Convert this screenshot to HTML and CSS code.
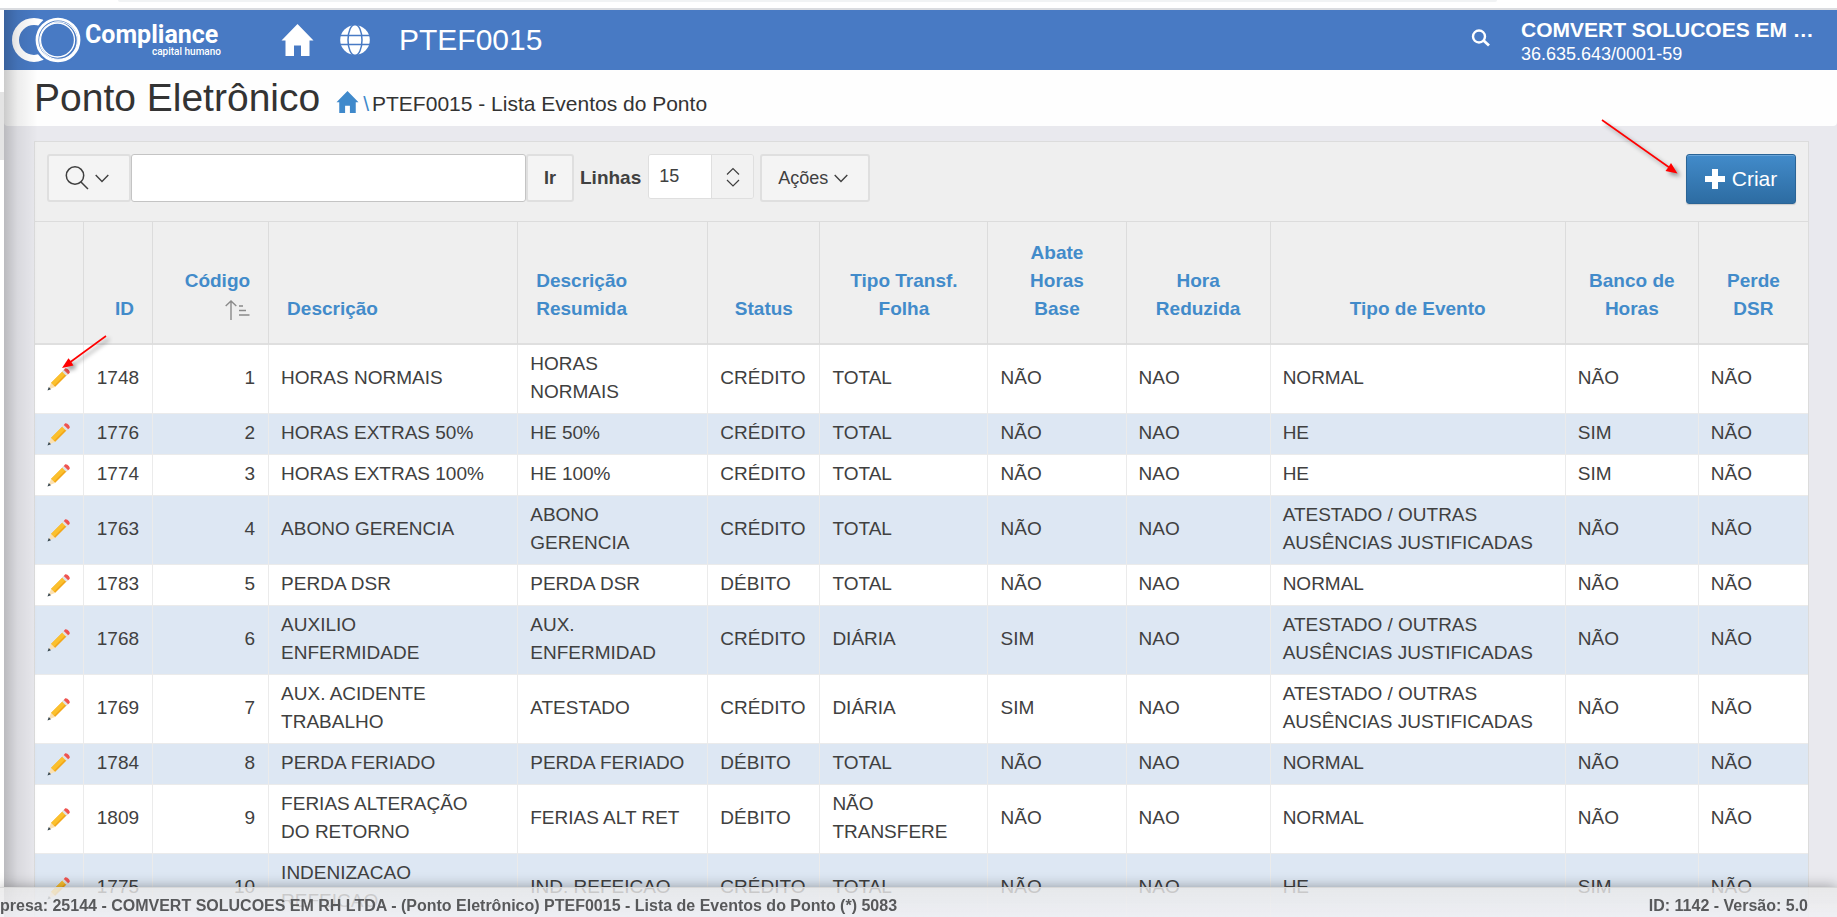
FILE: index.html
```html
<!DOCTYPE html>
<html lang="pt-BR">
<head>
<meta charset="utf-8">
<title>PTEF0015 - Lista Eventos do Ponto</title>
<link rel="stylesheet" href="styles.css">
</head>
<body>
<svg class="defs" aria-hidden="true">
  <symbol id="home" viewBox="0 0 32 32"><path fill="currentColor" d="M16 0 32 16.5H28V32H19.5V21.5H12.5V32H4V16.5H0Z"/></symbol>
  <symbol id="chevron" viewBox="0 0 14 9"><path fill="none" stroke="currentColor" stroke-width="1.4" d="M.7 1 7 7.6 13.300 1"/></symbol>
  <symbol id="pencil" viewBox="0 0 24 24">
    <path fill="#f2a71b" d="m4 16 13-13 4 4L8 20z"/><path fill="#fbc02d" d="m4 16 12.500-12.500 2.800 2.800L7 18.700z"/>
    <path fill="#dfe3e6" d="m15 4.600 2-2 4.400 4.400-2 2z"/>
    <path fill="#ef5350" d="m16.800 2.900 1.200-1.300c1.500-1.500 6 2.800 4.500 4.500l-1.300 1.200z"/>
    <path fill="#fbe0b0" d="m4 16 4 4-6.500 2.600z"/><path fill="#37474f" d="m1.800 20 2.200 2.200L.5 23.400z"/>
  </symbol>
</svg>
<div class="browser"><div class="address"></div></div>
<div class="page">
  <header class="topbar">
    <a class="logo" href="#" aria-label="Compliance capital humano">
      <svg class="rings" viewBox="0 0 70 46" aria-hidden="true">
        <circle cx="22" cy="23" r="18.500" fill="none" stroke="#fff" stroke-width="7"/>
        <circle cx="46" cy="23" r="24.500" fill="#487ac4"/>
        <ellipse cx="46" cy="23" rx="21" ry="20.800" fill="none" stroke="#fff" stroke-width="2.800"/>
        <circle cx="46.500" cy="23.500" r="18.800" fill="none" stroke="#fff" stroke-width="1.100"/>
        <circle cx="45.500" cy="23" r="17" fill="none" stroke="#fff" stroke-width="1.300"/>
      </svg>
      <span class="brand"><b>Compliance</b><small>capital humano</small></span>
    </a>
    <a class="nav-home" href="#" aria-label="Início"><svg><use href="#home"/></svg></a>
    <a class="nav-globe" href="#" aria-label="Idioma">
      <svg viewBox="0 0 30 30"><circle cx="15" cy="15" r="14.800" fill="#fff"/><g fill="none" stroke="#487ac4" stroke-width="1.500"><path d="M0 10.500H30M0 19.500H30"/><ellipse cx="15" cy="15" rx="7" ry="15.500"/></g></svg>
    </a>
    <span class="code">PTEF0015</span>
    <button class="find" aria-label="Pesquisar"><svg viewBox="0 0 20 18"><path fill="none" stroke="#fff" stroke-width="2.800" d="m12 11 6 5.500"/><circle cx="8" cy="7.500" r="6" fill="none" stroke="#fff" stroke-width="2.400"/></svg></button>
    <div class="company"><strong>COMVERT SOLUCOES EM …</strong><span>36.635.643/0001-59</span></div>
  </header>
  <div class="titlebar">
    <h1>Ponto Eletrônico</h1>
    <nav class="crumbs"><a href="#" aria-label="Início"><svg><use href="#home"/></svg></a><i>\</i><span>PTEF0015 - Lista Eventos do Ponto</span></nav>
  </div>
  <main class="report">
    <div class="toolbar">
      <button class="btn search-menu" aria-label="Colunas de pesquisa">
        <svg class="lens" viewBox="0 0 24 24"><g fill="none" stroke="currentColor" stroke-width="1.500"><circle cx="10" cy="9.500" r="8.700"/><path d="m16 16 7 7"/></g></svg>
        <svg class="chev"><use href="#chevron"/></svg>
      </button>
      <input class="search" type="text" aria-label="Pesquisar relatório">
      <button class="btn go">Ir</button>
      <label for="rows">Linhas</label>
      <div class="rows-box"><input id="rows" type="text" value="15"><button aria-label="Linhas por página"><svg viewBox="0 0 14 20"><path fill="none" stroke="currentColor" stroke-width="1.200" d="M1 7.500 7 1.500l6 6M1 13l6 6 6-6"/></svg></button></div>
      <button class="btn actions">Ações <svg class="chev"><use href="#chevron"/></svg></button>
      <button class="create"><svg viewBox="0 0 20 20"><path fill="#fff" d="M7 0h6v7h7v6h-7v7H7v-7H0V7h7z"/></svg>Criar</button>
    </div>
    <table>
      <colgroup><col class="c-edit"><col class="c-id"><col class="c-cod"><col class="c-desc"><col class="c-res"><col class="c-status"><col class="c-transf"><col class="c-abate"><col class="c-hora"><col class="c-tipo"><col class="c-banco"><col class="c-dsr"></colgroup>
      <thead><tr>
        <th></th><th class="num"><a href="#">ID</a></th>
        <th class="num"><a href="#">Código</a><br><svg class="sort" viewBox="0 0 25 20"><path fill="none" stroke="#8a8a8a" stroke-width="1.400" d="M6 20V1M.700 6 6 1l5.300 5M14 6h4M14 10.500h7M14 15h10.500"/></svg></th>
        <th class="left"><a href="#">Descrição</a></th><th class="left"><a href="#">Descrição Resumida</a></th><th><a href="#">Status</a></th><th><a href="#">Tipo Transf. Folha</a></th><th><a href="#">Abate Horas Base</a></th><th><a href="#">Hora Reduzida</a></th><th><a href="#">Tipo de Evento</a></th><th><a href="#">Banco de Horas</a></th><th><a href="#">Perde DSR</a></th>
      </tr></thead>
      <tbody>
        <tr><td><a href="#" aria-label="Editar"><svg><use href="#pencil"/></svg></a></td><td>1748</td><td>1</td><td>HORAS NORMAIS</td><td>HORAS<br>NORMAIS</td><td>CRÉDITO</td><td>TOTAL</td><td>NÃO</td><td>NAO</td><td>NORMAL</td><td>NÃO</td><td>NÃO</td></tr>
        <tr><td><a href="#" aria-label="Editar"><svg><use href="#pencil"/></svg></a></td><td>1776</td><td>2</td><td>HORAS EXTRAS 50%</td><td>HE 50%</td><td>CRÉDITO</td><td>TOTAL</td><td>NÃO</td><td>NAO</td><td>HE</td><td>SIM</td><td>NÃO</td></tr>
        <tr><td><a href="#" aria-label="Editar"><svg><use href="#pencil"/></svg></a></td><td>1774</td><td>3</td><td>HORAS EXTRAS 100%</td><td>HE 100%</td><td>CRÉDITO</td><td>TOTAL</td><td>NÃO</td><td>NAO</td><td>HE</td><td>SIM</td><td>NÃO</td></tr>
        <tr><td><a href="#" aria-label="Editar"><svg><use href="#pencil"/></svg></a></td><td>1763</td><td>4</td><td>ABONO GERENCIA</td><td>ABONO<br>GERENCIA</td><td>CRÉDITO</td><td>TOTAL</td><td>NÃO</td><td>NAO</td><td>ATESTADO / OUTRAS<br>AUSÊNCIAS JUSTIFICADAS</td><td>NÃO</td><td>NÃO</td></tr>
        <tr><td><a href="#" aria-label="Editar"><svg><use href="#pencil"/></svg></a></td><td>1783</td><td>5</td><td>PERDA DSR</td><td>PERDA DSR</td><td>DÉBITO</td><td>TOTAL</td><td>NÃO</td><td>NAO</td><td>NORMAL</td><td>NÃO</td><td>NÃO</td></tr>
        <tr><td><a href="#" aria-label="Editar"><svg><use href="#pencil"/></svg></a></td><td>1768</td><td>6</td><td>AUXILIO<br>ENFERMIDADE</td><td>AUX.<br>ENFERMIDAD</td><td>CRÉDITO</td><td>DIÁRIA</td><td>SIM</td><td>NAO</td><td>ATESTADO / OUTRAS<br>AUSÊNCIAS JUSTIFICADAS</td><td>NÃO</td><td>NÃO</td></tr>
        <tr><td><a href="#" aria-label="Editar"><svg><use href="#pencil"/></svg></a></td><td>1769</td><td>7</td><td>AUX. ACIDENTE<br>TRABALHO</td><td>ATESTADO</td><td>CRÉDITO</td><td>DIÁRIA</td><td>SIM</td><td>NAO</td><td>ATESTADO / OUTRAS<br>AUSÊNCIAS JUSTIFICADAS</td><td>NÃO</td><td>NÃO</td></tr>
        <tr><td><a href="#" aria-label="Editar"><svg><use href="#pencil"/></svg></a></td><td>1784</td><td>8</td><td>PERDA FERIADO</td><td>PERDA FERIADO</td><td>DÉBITO</td><td>TOTAL</td><td>NÃO</td><td>NAO</td><td>NORMAL</td><td>NÃO</td><td>NÃO</td></tr>
        <tr><td><a href="#" aria-label="Editar"><svg><use href="#pencil"/></svg></a></td><td>1809</td><td>9</td><td>FERIAS ALTERAÇÃO<br>DO RETORNO</td><td>FERIAS ALT RET</td><td>DÉBITO</td><td>NÃO<br>TRANSFERE</td><td>NÃO</td><td>NAO</td><td>NORMAL</td><td>NÃO</td><td>NÃO</td></tr>
        <tr><td><a href="#" aria-label="Editar"><svg><use href="#pencil"/></svg></a></td><td>1775</td><td>10</td><td>INDENIZACAO<br>REFEICAO</td><td>IND. REFEICAO</td><td>CRÉDITO</td><td>TOTAL</td><td>NÃO</td><td>NAO</td><td>HE</td><td>SIM</td><td>NÃO</td></tr>
      </tbody>
    </table>
  </main>
</div>
<div class="edge"></div>
<div class="gutter"></div>
<svg class="arrow arrow-create" viewBox="0 0 90 70" aria-hidden="true"><path d="M6 6 74 54" stroke="#f00" stroke-width="1.600"/><path fill="#f00" d="M81.500 59.500 69.500 57 72.500 53 75 49z"/></svg>
<svg class="arrow arrow-edit" viewBox="0 0 60 50" aria-hidden="true"><path d="M48 6 11 33" stroke="#f00" stroke-width="1.600"/><path fill="#f00" d="M4 38 10.500 28.300 13 31.500 15.500 35.500z"/></svg>
<footer class="status"><span>presa: 25144 - COMVERT SOLUCOES EM RH LTDA - (Ponto Eletrônico) PTEF0015 - Lista de Eventos do Ponto (*) 5083</span><span>ID: 1142 - Versão: 5.0</span></footer>
</body>
</html>
```
FILE: styles.css
```css
* { box-sizing: border-box; }
html, body { height: 100%; }
body { margin: 0; overflow: hidden; background: #e9e9ee; color: #404040; font: 19px/28px "Liberation Sans", Arial, sans-serif; }
a { color: inherit; text-decoration: none; }
button, input { font: inherit; color: inherit; }
button { cursor: pointer; }
svg { display: block; }
.defs { position: absolute; width: 0; height: 0; }

.browser { height: 10px; background: #fff; border-bottom: 2px solid #dadce0; padding: 0 340px 0 118px; }
.address { height: 2px; background: #f1f3f4; border-radius: 0 0 8px 8px; }
.page { margin-left: 4px; }

.topbar { height: 60px; display: flex; align-items: center; background: #487ac4; color: #fff; padding: 0 22px 0 8px; }
.logo { display: flex; align-items: center; gap: 3px; width: 269px; }
.rings { width: 70px; height: 46px; }
.brand { display: flex; flex-direction: column; width: 136px; }
.brand b { font: bold 25px/24px Roboto, sans-serif; }
.brand small { font: 500 10px/10px Roboto, sans-serif; text-align: right; }
.nav-home svg { width: 33px; height: 32px; }
.nav-globe { margin-left: 26px; }
.nav-globe svg { width: 30px; height: 30px; }
.code { margin-left: 29px; font-size: 30px; }
.find { margin-left: auto; padding: 0 0 5px; border: 0; background: none; }
.find svg { width: 20px; height: 18px; }
.company { width: 294px; margin-left: 30px; padding-top: 3px; display: flex; flex-direction: column; line-height: 24px; font-size: 18px; white-space: nowrap; }
.company strong { font-size: 21px; }

.titlebar { height: 56px; display: flex; align-items: baseline; gap: 16px; padding: 4px 30px 0; background: #fefefe; border-radius: 0 0 4px 4px; }
h1 { margin: 0; font-size: 39px; line-height: 48px; font-weight: 400; color: #333; }
.crumbs { display: flex; align-items: baseline; font-size: 21px; color: #333; }
.crumbs a, .crumbs i { color: #3f89cb; font-style: normal; }
.crumbs i { margin: 0 3px 0 4px; }
.crumbs svg { display: inline-block; width: 23px; height: 22px; vertical-align: -2px; }

.report { margin: 15px 28px 0 30px; border: 1px solid #dcdcdc; background: #efefef; }
.toolbar { height: 79px; display: flex; align-items: flex-start; padding: 12px 12px 0; }
.btn { height: 48px; border: 2px solid #dfdfdf; border-radius: 3px; background: #f4f4f4; font-size: 18px; display: flex; align-items: center; justify-content: center; gap: 6px; padding: 0 4px 0 0; }
.search-menu { width: 84px; }
.lens { width: 24px; height: 24px; }
.chev { width: 14px; height: 9px; }
.search { width: 395px; height: 48px; border: 1px solid #c4c4c4; border-radius: 3px; background: #fff; padding: 0 12px; }
.go { width: 48px; padding: 0; font-weight: bold; }
.toolbar label { margin: 10px 7px 0 6px; font-weight: bold; }
.rows-box { display: flex; width: 106px; height: 45px; border: 1px solid #dfdfdf; border-radius: 3px; overflow: hidden; }
.rows-box input { width: 62px; border: 0; padding: 0 10px 2px; font-size: 18px; background: #fff; }
.rows-box button { flex: 1; border: 0; border-left: 1px solid #dfdfdf; background: #f2f2f2; display: flex; align-items: center; justify-content: center; padding: 0; }
.rows-box svg { width: 14px; height: 20px; }
.actions { width: 110px; margin-left: 6px; }
.create { width: 110px; height: 50px; margin-left: auto; border: 1px solid #2a6496; border-radius: 3px; background: linear-gradient(#428bca, #2d6ca2); box-shadow: inset 0 1px 0 #69a4d8, 0 1px 1px #ccc; color: #fff; font-size: 21px; display: flex; align-items: center; justify-content: center; gap: 7px; padding: 0; }
.create svg { width: 20px; height: 20px; }

table { width: 100%; table-layout: fixed; border-collapse: separate; border-spacing: 0; }
.c-edit { width: 49px; } .c-id { width: 69px; } .c-cod { width: 116px; } .c-desc { width: 249px; }
.c-res { width: 190px; } .c-status { width: 112px; } .c-transf { width: 168px; } .c-abate { width: 138px; }
.c-hora { width: 144px; } .c-tipo { width: 295px; } .c-banco { width: 133px; } .c-dsr { width: 109px; }
th { padding: 17px 18px 20px; border-top: 1px solid #dcdcdc; border-bottom: 2px solid #dfdfdf; border-right: 1px solid #dcdcdc; vertical-align: bottom; color: #428bca; background: #efefef; }
th:last-child, td:last-child { border-right: 0; }
th.left { text-align: left; }
th.num { text-align: right; }
.sort { display: inline-block; width: 25px; height: 20px; vertical-align: middle; }
td { padding: 5px 0 7px 12px; border-right: 1px solid #ebebeb; border-bottom: 1px solid #ebebeb; background: #fff; white-space: nowrap; }
td:nth-child(2), td:nth-child(3) { text-align: right; padding: 5px 13px 7px 0; }
tr:nth-child(even) td { background: #dde7f3; }
td svg { width: 24px; height: 24px; margin-top: 2px; }

.edge { position: absolute; z-index: 2; left: 4px; top: 10px; bottom: 0; width: 34px; background: linear-gradient(90deg, rgba(0,0,0,.2), rgba(0,0,0,.07) 40%, transparent); }
.gutter { position: absolute; left: 0; top: 10px; bottom: 0; width: 4px; background: linear-gradient(#fff 82px, #e4e4e4 82px, #e4e4e4 150px, #fff 150px); }
.arrow { position: absolute; z-index: 3; filter: drop-shadow(3px 3px 2px rgba(0,0,0,.4)); }
.arrow-create { left: 1596px; top: 114px; width: 90px; height: 70px; }
.arrow-edit { left: 58px; top: 330px; width: 60px; height: 50px; }
.status { position: fixed; z-index: 4; left: 0; right: 0; bottom: 0; height: 30px; padding: 4px 29px 0 0; display: flex; justify-content: space-between; border-top: 1px solid #d8d8d8; background: linear-gradient(rgba(232,232,232,.8), rgba(240,240,244,.85)); box-shadow: 0 0 14px rgba(0,0,0,.35); color: #58595b; font-size: 16px; font-weight: bold; line-height: 28px; white-space: nowrap; }
```
